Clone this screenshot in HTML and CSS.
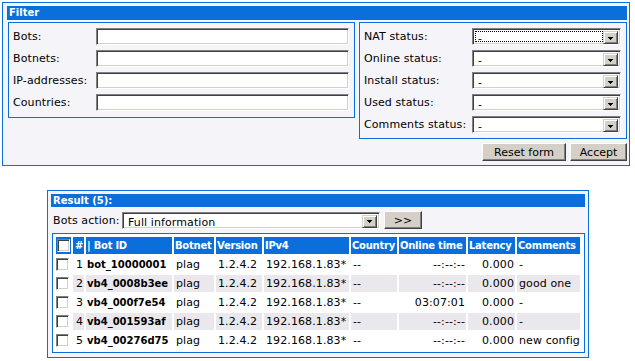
FILE: index.html
```html
<!DOCTYPE html>
<html lang="en">
<head>
  <meta charset="UTF-8">
  <title>Bots</title>
  <link rel="stylesheet" href="styles.css">
</head>
<body>
  <div class="panel filter">
    <div class="panel-title">Filter</div>
    <div class="filter-body">
      <div class="box box-left">
        <div class="field"><label>Bots:</label><input class="text" type="text"></div>
        <div class="field"><label>Botnets:</label><input class="text" type="text"></div>
        <div class="field"><label>IP-addresses:</label><input class="text" type="text"></div>
        <div class="field"><label>Countries:</label><input class="text" type="text"></div>
      </div>
      <div class="box box-right">
        <div class="field"><label>NAT status:</label>
          <div class="select"><span class="value focused">-</span><span class="arrow"><svg width="5" height="3" viewBox="0 0 5 3"><path d="M0 0h5v1h-1v1h-1v1h-1v-1h-1v-1h-1z" fill="#000"/></svg></span></div>
        </div>
        <div class="field"><label>Online status:</label>
          <div class="select"><span class="value">-</span><span class="arrow"><svg width="5" height="3" viewBox="0 0 5 3"><path d="M0 0h5v1h-1v1h-1v1h-1v-1h-1v-1h-1z" fill="#000"/></svg></span></div>
        </div>
        <div class="field"><label>Install status:</label>
          <div class="select"><span class="value">-</span><span class="arrow"><svg width="5" height="3" viewBox="0 0 5 3"><path d="M0 0h5v1h-1v1h-1v1h-1v-1h-1v-1h-1z" fill="#000"/></svg></span></div>
        </div>
        <div class="field"><label>Used status:</label>
          <div class="select"><span class="value">-</span><span class="arrow"><svg width="5" height="3" viewBox="0 0 5 3"><path d="M0 0h5v1h-1v1h-1v1h-1v-1h-1v-1h-1z" fill="#000"/></svg></span></div>
        </div>
        <div class="field"><label>Comments status:</label>
          <div class="select"><span class="value">-</span><span class="arrow"><svg width="5" height="3" viewBox="0 0 5 3"><path d="M0 0h5v1h-1v1h-1v1h-1v-1h-1v-1h-1z" fill="#000"/></svg></span></div>
        </div>
      </div>
    </div>
    <div class="actions">
      <button class="btn btn-reset">Reset form</button>
      <button class="btn btn-accept">Accept</button>
    </div>
  </div>

  <div class="panel result">
    <div class="panel-title">Result (5):</div>
    <div class="action-row">
      <label>Bots action:</label>
      <div class="select select-wide"><span class="value">Full information</span><span class="arrow"><svg width="5" height="3" viewBox="0 0 5 3"><path d="M0 0h5v1h-1v1h-1v1h-1v-1h-1v-1h-1z" fill="#000"/></svg></span></div>
      <button class="btn btn-go">&gt;&gt;</button>
    </div>
    <div class="table-box">
      <table class="bots">
        <thead>
          <tr>
            <th class="c-cb"><input class="check" type="checkbox"></th>
            <th class="c-num">#</th>
            <th class="c-id">| Bot ID</th>
            <th class="c-net">Botnet</th>
            <th class="c-ver">Version</th>
            <th class="c-ip">IPv4</th>
            <th class="c-country">Country</th>
            <th class="c-time">Online time</th>
            <th class="c-lat">Latency</th>
            <th class="c-com">Comments</th>
          </tr>
        </thead>
        <tbody>
          <tr>
            <td class="cb"><input class="check" type="checkbox"></td>
            <td class="num">1</td><td class="id">bot_10000001</td><td>plag</td><td>1.2.4.2</td><td>192.168.1.83*</td><td>--</td><td class="right">--:--:--</td><td class="right">0.000</td><td>-</td>
          </tr>
          <tr class="even">
            <td class="cb"><input class="check" type="checkbox"></td>
            <td class="num">2</td><td class="id">vb4_0008b3ee</td><td>plag</td><td>1.2.4.2</td><td>192.168.1.83*</td><td>--</td><td class="right">--:--:--</td><td class="right">0.000</td><td>good one</td>
          </tr>
          <tr>
            <td class="cb"><input class="check" type="checkbox"></td>
            <td class="num">3</td><td class="id">vb4_000f7e54</td><td>plag</td><td>1.2.4.2</td><td>192.168.1.83*</td><td>--</td><td class="right">03:07:01</td><td class="right">0.000</td><td>-</td>
          </tr>
          <tr class="even">
            <td class="cb"><input class="check" type="checkbox"></td>
            <td class="num">4</td><td class="id">vb4_001593af</td><td>plag</td><td>1.2.4.2</td><td>192.168.1.83*</td><td>--</td><td class="right">--:--:--</td><td class="right">0.000</td><td>-</td>
          </tr>
          <tr>
            <td class="cb"><input class="check" type="checkbox"></td>
            <td class="num">5</td><td class="id">vb4_00276d75</td><td>plag</td><td>1.2.4.2</td><td>192.168.1.83*</td><td>--</td><td class="right">--:--:--</td><td class="right">0.000</td><td>new config</td>
          </tr>
        </tbody>
      </table>
    </div>
  </div>
</body>
</html>
```

FILE: styles.css
```css
body {
  margin: 0;
  background-color: #fff;
  font-family: "DejaVu Sans", Verdana, sans-serif;
  font-size: 11px;
  letter-spacing: 0.1px;
  color: #000;
}
.panel {
  box-sizing: border-box;
  border: 1px solid #0a6fdb;
  background-color: #f5f4f8; /* light lavender panel */
}
.panel-title {
  background-color: #0a6fdb;
  color: #fff;
  font-weight: bold;
  font-size: 10px;
  letter-spacing: 0;
  padding-left: 2px;
}

/* Filter */
.filter {
  width: 628px;
  margin: 2px 0 0 2px;
  padding: 3px 2px 4px 4px;
}
.filter .panel-title {
  height: 14px;
  line-height: 14px;
}
.filter-body {
  display: flex;
  align-items: flex-start;
  margin-top: 2px;
}
.box {
  box-sizing: border-box;
  border: 1px solid #0a6fdb;
  display: flex;
  flex-direction: column;
  gap: 5px;
}
.box-left {
  width: 347px;
  margin-left: 1px;
  padding: 5px 5px 6px 4px;
}
.box-right {
  width: 268px;
  margin-left: 4px;
  padding: 5px 5px 5px 4px;
}
.field {
  display: flex;
  align-items: center;
  height: 17px;
}
.box-left label { width: 83px; }
.box-right label { width: 108px; white-space: nowrap; }

/* sunken win2k controls */
.text,
.select,
.check {
  box-sizing: border-box;
  border: 1px solid;
  border-color: #808080 #fff #fff #808080;
  box-shadow: inset 1px 1px #404040, inset -1px -1px #d4d0c8;
  background-color: #fff;
}
.text {
  width: 253px;
  height: 17px;
  margin: 0;
  padding: 0 3px;
  font: inherit;
  outline: none;
}
.select {
  width: 149px;
  height: 17px;
  padding: 2px;
  display: flex;
}
.select .value {
  flex: 1;
  box-sizing: border-box;
  line-height: 13px;
  padding-left: 2px;
  border: 1px solid transparent;
}
.select .value.focused {
  border: 1px dotted #000;
}
.select .arrow {
  width: 15px;
  height: 13px;
  box-sizing: border-box;
  background-color: #d4d0c8;
  border: 1px solid;
  border-color: #d4d0c8 #404040 #404040 #d4d0c8;
  box-shadow: inset 1px 1px #fff, inset -1px -1px #808080;
  display: flex;
  align-items: center;
  justify-content: center;
  padding-top: 1px;
}
.select .arrow svg { display: block; }

.btn {
  box-sizing: border-box;
  height: 18px;
  margin: 0;
  padding: 0;
  font: inherit;
  color: #000;
  background-color: #d4d0c8;
  border: 1px solid;
  border-color: #fff #404040 #404040 #fff;
  box-shadow: inset -1px -1px #808080;
}
.actions {
  display: flex;
  justify-content: flex-end;
  gap: 4px;
  margin-top: 4px;
}
.btn-reset { width: 84px; }
.btn-accept { width: 57px; }

/* Result */
.result {
  width: 542px;
  margin: 24px 0 0 47px;
  padding: 3px 3px 4px 3px;
}
.result .panel-title {
  height: 13px;
  line-height: 13px;
}
.action-row {
  display: flex;
  align-items: center;
  height: 18px;
  margin-top: 4px;
}
.action-row label {
  box-sizing: border-box;
  width: 71px;
  padding-left: 2px;
  white-space: nowrap;
}
.select-wide { width: 258px; }
.btn-go {
  width: 38px;
  margin-left: 4px;
}
.table-box {
  box-sizing: border-box;
  width: 533px;
  margin: 4px 0 0 1px;
  border: 1px solid #0a6fdb;
  padding: 1px;
  background-color: #fff;
}
.bots {
  width: 528px;
  table-layout: fixed;
  border-collapse: separate;
  border-spacing: 2px;
}
.bots th,
.bots td {
  box-sizing: border-box;
  height: 17px;
  padding: 0 2px;
  white-space: nowrap;
  overflow: hidden;
  text-align: left;
  vertical-align: middle;
}
.bots th {
  background-color: #0a6fdb;
  color: #fff;
  font-size: 10px;
  font-weight: bold;
  letter-spacing: -0.25px;
  padding: 0 1px;
}
.c-cb { width: 15px; }
.c-num { width: 11px; }
.c-id { width: 86px; }
.c-net { width: 40px; }
.c-ver { width: 46px; }
.c-ip { width: 85px; }
.c-country { width: 46px; }
.c-time { width: 67px; }
.c-lat { width: 47px; }
.c-com { width: 63px; }
.bots th.c-num { padding-left: 2px; }
.bots td.cb { padding: 0; }
.check {
  appearance: none;
  -webkit-appearance: none;
  display: block;
  width: 13px;
  height: 13px;
  margin: 0;
}
.bots td.num,
.bots td.right {
  text-align: right;
  padding-right: 1px;
}
.bots td.id {
  font-size: 10px;
  font-weight: bold;
  letter-spacing: 0;
  padding-left: 1px;
}
.bots tr.even td {
  background-color: #ebe8ed;
}
.bots tr.even td.cb {
  background-color: #fff;
}
```
